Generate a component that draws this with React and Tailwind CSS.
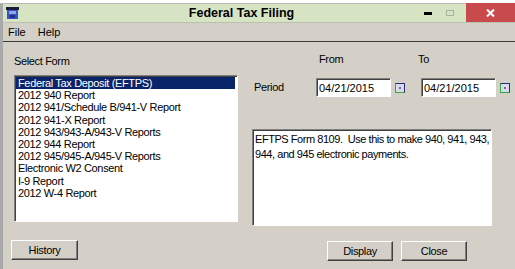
import React, { useState } from 'react';

const forms = [
  'Federal Tax Deposit (EFTPS)',
  '2012 940 Report',
  '2012 941/Schedule B/941-V Report',
  '2012 941-X Report',
  '2012 943/943-A/943-V Reports',
  '2012 944 Report',
  '2012 945/945-A/945-V Reports',
  'Electronic W2 Consent',
  'I-9 Report',
  '2012 W-4 Report',
];

const sunken =
  'border border-t-[#808080] border-l-[#808080] border-b-white border-r-white shadow-[inset_1px_1px_0_#404040] bg-white';
const raised =
  'border border-t-white border-l-white border-b-[#404040] border-r-[#404040] shadow-[inset_-1px_-1px_0_#808080] bg-[#d4d0c8] text-[11px] text-black';

const CalendarButton = () => (
  <div className="ml-[4px] mt-[5px] w-[10px] h-[10px] border border-[#24307a] border-l-[#3aa844] border-b-[#3aa844] bg-[#d9d9ec] flex items-center justify-center">
    <div className="w-[2px] h-[2px] bg-[#7a6a9a]" />
  </div>
);

const App = () => {
  const [selected, setSelected] = useState(0);
  const [from, setFrom] = useState('04/21/2015');
  const [to, setTo] = useState('04/21/2015');

  return (
    <div
      className="w-[515px] h-[269px] overflow-hidden bg-white text-black"
      style={{ fontFamily: '"Liberation Sans", Arial, sans-serif' }}
    >
      <div className="h-[4px] bg-white border-b border-[#b8b8b8]" />
      <div className="bg-[#d4d0c8] border-l-[3px] border-[#a8a8a8] h-[265px]">
        {/* title bar */}
        <div className="h-[19px] bg-[#d7e4c3] border-b border-[#b9c2ad] flex items-center">
          <svg width="13" height="12" viewBox="0 0 13 12" className="ml-[3px]">
            <rect x="0" y="0" width="13" height="3" fill="#1b1b3a" />
            <rect x="1" y="3" width="11" height="9" fill="#3552c4" />
            <rect x="3" y="4" width="7" height="3" fill="#8fa6ee" />
            <rect x="4" y="8" width="5" height="3" fill="#1d2f86" />
          </svg>
          <div className="flex-1 text-center text-[12.5px] font-bold pl-[40px]">Federal Tax Filing</div>
          <div className="flex items-center h-full">
            <div className="w-[8px] h-[2.5px] bg-black mr-[14px] mt-[1px]" />
            <div className="w-[8px] h-[6px] border border-[#a9b1a0] mr-[12px]" />
            <div className="w-[49px] h-[19px] -mt-[1px] bg-[#c94a4d] flex items-center justify-center">
              <svg width="9" height="8" viewBox="0 0 9 8">
                <path d="M1 0.5 L8 7.5 M8 0.5 L1 7.5" stroke="#fff" strokeWidth="2" />
              </svg>
            </div>
          </div>
        </div>

        {/* menu */}
        <div className="h-[19px] flex items-center gap-[12px] pl-[5px] text-[11px] border-b border-[#3a3a3a]">
          <span>File</span>
          <span>Help</span>
        </div>

        {/* body */}
        <div className="flex text-[11px] leading-[13px] tracking-[-0.35px]">
          <div className="pl-[8px] w-[236px]">
            <div className="mt-[13px] ml-[3px]">Select Form</div>
            <div className={`mt-[7px] ml-[3px] w-[224px] h-[147px] py-[1px] pl-[1px] pr-[2px] ${sunken}`}>
              {forms.map((f, i) => (
                <div
                  key={f}
                  onClick={() => setSelected(i)}
                  className={`h-[12.2px] leading-[12px] pl-[2px] whitespace-nowrap ${
                    selected === i ? 'bg-[#0a246a] text-white' : ''
                  }`}
                >
                  {f}
                </div>
              ))}
            </div>
            <button className={`mt-[18px] w-[67px] h-[20px] ${raised}`}>History</button>
          </div>

          <div className="ml-[13px] w-[262px]">
            <div className="mt-[11px] flex">
              <span className="ml-[67px] w-[99px]">From</span>
              <span>To</span>
            </div>
            <div className="mt-[12px] flex">
              <span className="w-[64px] pl-[2px] leading-[19px]">Period</span>
              <input
                value={from}
                onChange={(e) => setFrom(e.target.value)}
                className={`w-[75px] h-[19px] px-[2px] text-[11px] tracking-normal outline-none ${sunken}`}
              />
              <CalendarButton />
              <input
                value={to}
                onChange={(e) => setTo(e.target.value)}
                className={`ml-[16px] w-[75px] h-[19px] px-[2px] text-[11px] tracking-normal outline-none ${sunken}`}
              />
              <CalendarButton />
            </div>
            <div className={`mt-[32px] w-[240px] h-[97px] pl-[2px] pr-0 py-[2px] leading-[15px] tracking-[-0.45px] ${sunken}`}>
              EFTPS Form 8109.&nbsp; Use this to make 940, 941, 943,
              <br />
              944, and 945 electronic payments.
            </div>
            <div className="mt-[15px] ml-[75px] flex gap-[8px]">
              <button className={`w-[66px] h-[20px] ${raised}`}>Display</button>
              <button className={`w-[66px] h-[20px] ${raised}`}>Close</button>
            </div>
          </div>
        </div>
      </div>
    </div>
  );
};

export default App;
